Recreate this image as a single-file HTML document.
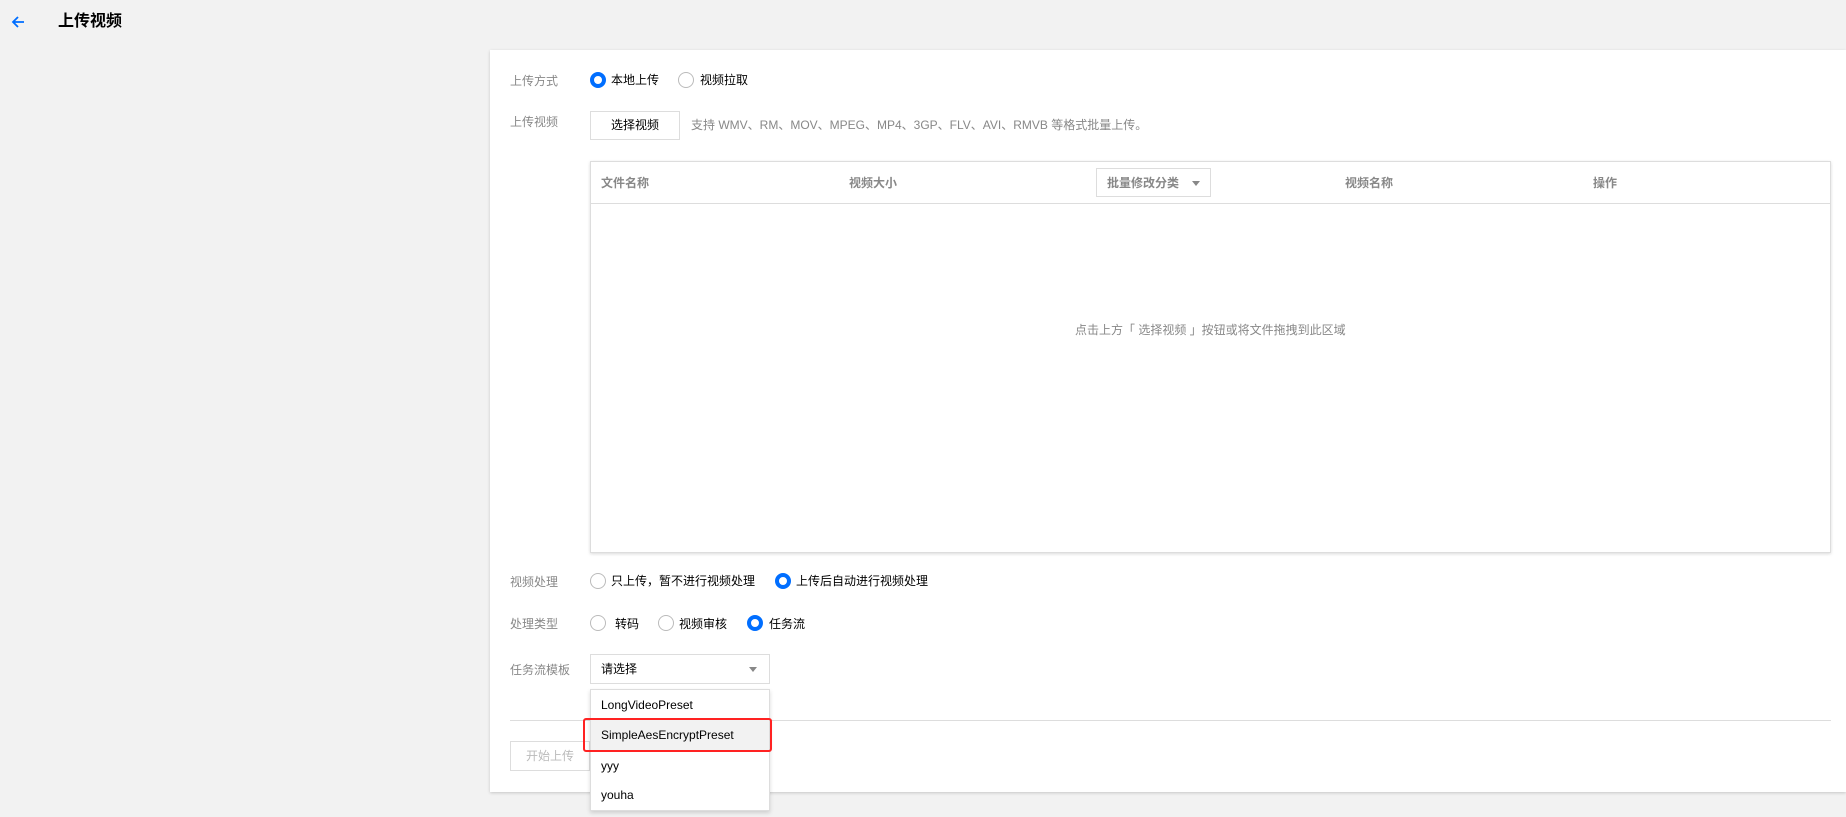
<!DOCTYPE html>
<html><head><meta charset="utf-8"><style>
*{box-sizing:border-box;margin:0;padding:0}
body{width:1846px;height:817px;background:#f2f2f2;font-family:"Liberation Sans","Noto Sans CJK SC",sans-serif;font-size:12px;color:#000;position:relative;overflow:hidden}
.a{position:absolute}
.lbl{color:#888;font-size:12px}
.radio{width:16px;height:16px;border-radius:50%;border:1px solid #bbb;background:#fff}
.radio.on{border:4px solid #006eff}
.t{line-height:16px;white-space:nowrap}
</style></head><body>
<svg class="a" style="left:10px;top:14px" width="16" height="16" viewBox="0 0 16 16"><path d="M14 8H3M8 3L3 8l5 5" stroke="#006eff" stroke-width="1.8" fill="none"/></svg>
<div class="a" style="left:58px;top:11px;font-size:16px;font-weight:bold;color:#000;line-height:22px">上传视频</div>

<div class="a" style="left:490px;top:50px;width:1356px;height:742px;background:#fff;box-shadow:0 1px 3px rgba(0,0,0,.18)"></div>

<div class="a lbl t" style="left:510px;top:73px">上传方式</div>
<div class="a radio on" style="left:590px;top:72px"></div>
<div class="a t" style="left:611px;top:72px">本地上传</div>
<div class="a radio" style="left:678px;top:72px"></div>
<div class="a t" style="left:700px;top:72px">视频拉取</div>

<div class="a lbl t" style="left:510px;top:114px">上传视频</div>
<div class="a" style="left:590px;top:111px;width:90px;height:29px;border:1px solid #ddd;text-align:center;line-height:27px">选择视频</div>
<div class="a t" style="left:691px;top:117px;color:#888">支持 WMV、RM、MOV、MPEG、MP4、3GP、FLV、AVI、RMVB 等格式批量上传。</div>

<div class="a" style="left:590px;top:161px;width:1241px;height:392px;border:1px solid #ddd;box-shadow:0 1px 3px rgba(0,0,0,.15)"></div>
<div class="a" style="left:591px;top:203px;width:1239px;height:1px;background:#ddd"></div>
<div class="a t" style="left:601px;top:175px;color:#888;font-weight:bold">文件名称</div>
<div class="a t" style="left:849px;top:175px;color:#888;font-weight:bold">视频大小</div>
<div class="a" style="left:1096px;top:168px;width:115px;height:29px;border:1px solid #ddd"></div>
<div class="a t" style="left:1107px;top:175px;color:#888;font-weight:bold">批量修改分类</div>
<div class="a" style="left:1192px;top:181px;border-left:4px solid transparent;border-right:4px solid transparent;border-top:5px solid #888"></div>
<div class="a t" style="left:1345px;top:175px;color:#888;font-weight:bold">视频名称</div>
<div class="a t" style="left:1593px;top:175px;color:#888;font-weight:bold">操作</div>
<div class="a t" style="left:1075px;top:322px;color:#888">点击上方「 选择视频 」按钮或将文件拖拽到此区域</div>

<div class="a lbl t" style="left:510px;top:574px">视频处理</div>
<div class="a radio" style="left:590px;top:573px"></div>
<div class="a t" style="left:611px;top:573px">只上传，暂不进行视频处理</div>
<div class="a radio on" style="left:775px;top:573px"></div>
<div class="a t" style="left:796px;top:573px">上传后自动进行视频处理</div>

<div class="a lbl t" style="left:510px;top:616px">处理类型</div>
<div class="a radio" style="left:590px;top:615px"></div>
<div class="a t" style="left:615px;top:616px">转码</div>
<div class="a radio" style="left:658px;top:615px"></div>
<div class="a t" style="left:679px;top:616px">视频审核</div>
<div class="a radio on" style="left:747px;top:615px"></div>
<div class="a t" style="left:769px;top:616px">任务流</div>

<div class="a lbl t" style="left:510px;top:662px">任务流模板</div>
<div class="a" style="left:590px;top:654px;width:180px;height:30px;border:1px solid #ddd"></div>
<div class="a t" style="left:601px;top:661px">请选择</div>
<div class="a" style="left:749px;top:667px;border-left:4px solid transparent;border-right:4px solid transparent;border-top:5px solid #888"></div>

<div class="a" style="left:510px;top:720px;width:1321px;height:1px;background:#ddd"></div>
<div class="a" style="left:510px;top:741px;width:80px;height:30px;border:1px solid #ddd;color:#bbb;text-align:center;line-height:28px">开始上传</div>

<div class="a" style="left:590px;top:689px;width:180px;height:122px;background:#fff;border:1px solid #ddd;box-shadow:0 2px 4px rgba(0,0,0,.15)"></div>
<div class="a" style="left:591px;top:720px;width:178px;height:30px;background:#f2f2f2"></div>
<div class="a t" style="left:601px;top:697px">LongVideoPreset</div>
<div class="a t" style="left:601px;top:727px">SimpleAesEncryptPreset</div>
<div class="a t" style="left:601px;top:758px">yyy</div>
<div class="a t" style="left:601px;top:787px">youha</div>
<div class="a" style="left:583px;top:718px;width:189px;height:34px;border:2.5px solid #f22;border-radius:3px"></div>
</body></html>
